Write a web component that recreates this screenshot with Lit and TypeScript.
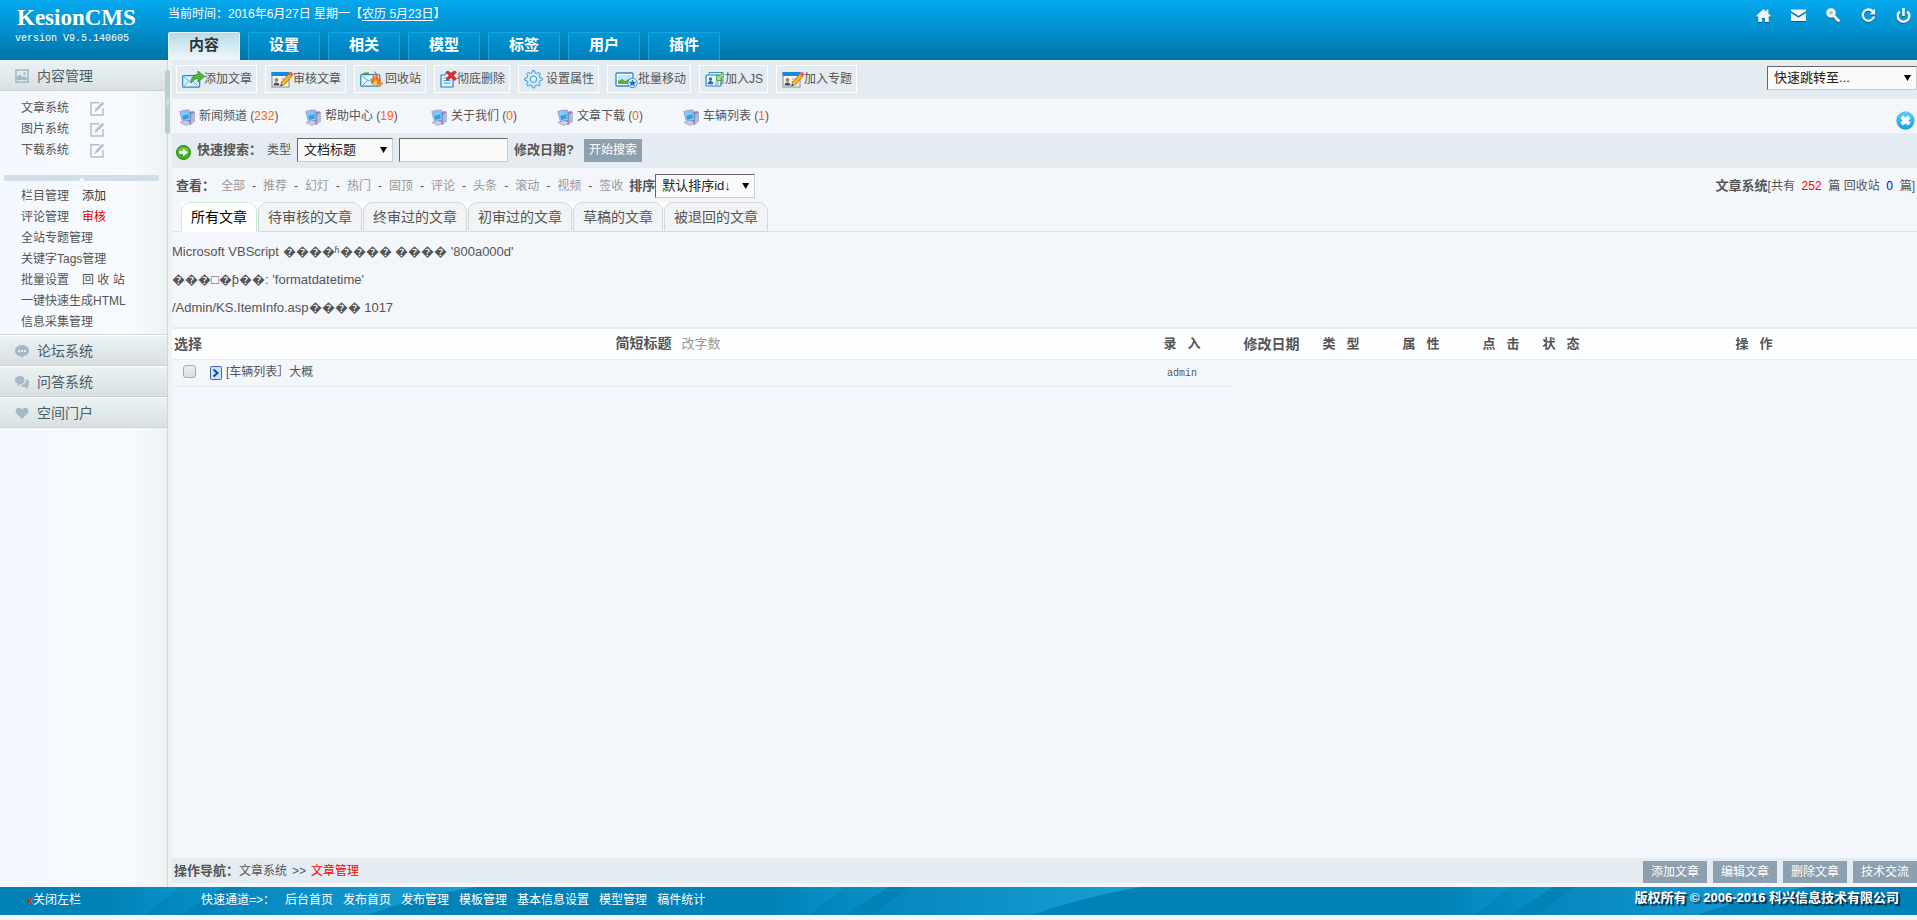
import { LitElement, html, css, svg, nothing } from "lit";
import { customElement, state } from "lit/decorators.js";
import { classMap } from "lit/directives/class-map.js";

const baseStyles = css`
  * { box-sizing: border-box; }
  a { color: inherit; text-decoration: none; }
  ul { list-style: none; margin: 0; padding: 0; }
  button { font: inherit; color: inherit; margin: 0; padding: 0; border: 0; background: none; cursor: pointer; }
  svg { display: block; flex: none; }
`;

const pencilCard = svg`
  <rect x="1" y="4" width="17" height="14" fill="#f4f7fa" stroke="#7e8c98"/>
  <rect x="0.5" y="3" width="18" height="4" fill="#1c86d8"/>
  <circle cx="5.5" cy="11" r="2" fill="#b8834a"/><path d="M2.5 16.5c0-4 6-4 6 0z" fill="#31506b"/>
  <path d="M10 10h5M10 12.5h3" stroke="#8fb4d6"/>
  <path d="M9.5 17l1.200-4 7-8 3 2.500-7 8z" fill="#f7b52c" stroke="#a86a10" stroke-width=".8"/>
  <path d="M17.500 5l1.500-1.800c1-1 4 1.200 3 2.600L20.700 7.500z" fill="#f0605c"/>
  <path d="M9.500 17l.6-2 1.500 1.200z" fill="#333"/>`;

const icons: Record<string, unknown> = {
  add: svg`
    <rect x="0.7" y="6.700" width="17" height="11.500" rx="1" fill="#d9effb" stroke="#2a8cc4" stroke-width="1.200"/>
    <path d="M1.500 7.500l7.500 6 7.500-6M1.500 17.500l5.500-5.500M16.500 17.500l-5.500-5.500" fill="none" stroke="#6fb4dc"/>
    <path d="M9 14c0-6 3-8.500 7-8.500V2l6.500 5.500L16 13V9.500c-3 0-5 1-7 4.500z" fill="#56b63c" stroke="#2f8a22" stroke-width=".8"/>`,
  audit: pencilCard,
  recycle: svg`
    <rect x="0.700" y="5.700" width="19" height="11.500" rx="1" fill="#e2f3fb" stroke="#2b8fb0" stroke-width="1.200"/>
    <path d="M1 5.500h8V3.500H5z" fill="#3c9a46"/><path d="M2 7l7 5 5-4M2 17l6-6" fill="none" stroke="#5aa9d2"/>
    <path d="M11 14c-1-4 2-4 2-8 2 1 2 3 2 4 1-2 0-5-1-8 4 2 4 5 4 8 1-1 1-2 1-3 3 3 3 9-3 9-3 0-4-1-5-2z" fill="#f0702a"/>
    <path d="M13.500 15c0-3 2-2 2-5 2 2 3 5 0 6z" fill="#ffd84a"/>
    <path d="M18 17l4-4 1.500 1-3.500 4z" fill="#d79a2a"/>`,
  remove: svg`
    <path d="M1 6h4l1-2h7v14H1z" fill="#e4f3fc" stroke="#2b83bd" stroke-width="1.200"/>
    <path d="M3.500 9h7M3.500 11.500h7M3.500 14h7" stroke="#4b9fd1"/>
    <path d="M6 3l2-1 3 2.500L14 2l2.500 1-3 3.500 3 3.500-2 1.500-3.500-3-3 3-2-1.500 3-3.500z" fill="#e02f36" stroke="#b31d24" stroke-width=".6"/>`,
  gear: svg`
    <path d="M8.500 1.500l2 0 .6 2.300 1.700.7 2.100-1.200 1.500 1.500-1.200 2.100.7 1.700 2.300.6v2l-2.300.6-.7 1.700 1.200 2.100-1.500 1.500-2.100-1.200-1.700.7-.6 2.300h-2l-.6-2.300-1.700-.7-2.100 1.200-1.500-1.500 1.200-2.100-.7-1.700L.8 11.200v-2l2.300-.6.7-1.700-1.200-2.100 1.500-1.500 2.100 1.200 1.700-.7z" fill="#cfe9f8" stroke="#3f98cb"/>
    <circle cx="9.500" cy="10.200" r="3.200" fill="#e5ecf3" stroke="#3f98cb"/>`,
  move: svg`
    <rect x="3" y="4" width="17" height="13" rx="1" fill="#fff" stroke="#2a8cc4" stroke-width="1.300"/>
    <rect x="5" y="6" width="13" height="9" fill="#bfe5f7"/><path d="M5 15v-3l4-2 3 2 6-3v6z" fill="#5fae3d"/>
    <circle cx="19.500" cy="14" r="4.700" fill="#e3f2fb" stroke="#3f8fc9"/>
    <path d="M19.500 10.500l1.200 2.300 2.500.3-1.800 1.700.4 2.500-2.300-1.200-2.300 1.200.4-2.500-1.800-1.700 2.500-.3z" fill="#1d76bb"/>`,
  js: svg`
    <path d="M4 3.500h14v11H4z" fill="#d5ecf8" stroke="#3d94c2"/><rect x="1" y="6" width="15" height="11" rx="1" fill="#e9f6fd" stroke="#2484bb" stroke-width="1.200"/>
    <circle cx="5.500" cy="10" r="1.700" fill="#2470a8"/><path d="M3 15c0-4 5-4 5 0zM10 13h4M10 15h4" fill="#2470a8" stroke="#2470a8" stroke-width=".6"/>
    <path d="M17.500 3.500l-4 4-2-2v6h6l-2-2 3.500-4z" fill="#a9dc8c" stroke="#3d8a25" stroke-width=".7"/>`,
  topic: pencilCard,
};

interface Tool { icon: string; text: string; w: number; }

const tools: Tool[] = [
  { icon: "add", text: "添加文章", w: 22 },
  { icon: "audit", text: "审核文章", w: 22 },
  { icon: "recycle", text: "回收站", w: 25 },
  { icon: "remove", text: "彻底删除", w: 17 },
  { icon: "gear", text: "设置属性", w: 22 },
  { icon: "move", text: "批量移动", w: 25 },
  { icon: "js", text: "加入JS", w: 20 },
  { icon: "topic", text: "加入专题", w: 22 },
];

@customElement("cms-header")
class CmsHeader extends LitElement {
  @state() private active = 0;

  static styles = [baseStyles, css`
    :host { display: grid; grid-template-columns: 168px 1fr; height: 60px; color: #fff;
      background: linear-gradient(#06a8ee, #0193d2 45%, #0173a6); }
    .brand { padding: 4px 0 0 15px; }
    .logo { font: bold 23px/28px "Liberation Serif", serif; padding-left: 2px; }
    .version { font: 10px/14px "Liberation Mono", monospace; }
    .right { display: flex; flex-direction: column; justify-content: space-between; }
    .top { display: flex; justify-content: space-between; padding: 6px 6px 0 0; line-height: 16px; }
    .top u { text-underline-offset: 2px; }
    .quick { display: flex; gap: 20px; padding-top: 2px; filter: drop-shadow(0 1px 0 #0a5c86); }
    nav { display: flex; gap: 8px; }
    .tab { width: 72px; height: 28px; font-weight: bold; font-size: 15px; line-height: 24px; padding-bottom: 3px;
      background: linear-gradient(#0295d5, #0180bb); border: 1px solid #16a5df; border-bottom: 0; border-radius: 2px 2px 0 0; }
    .tab.on { color: #333; background: linear-gradient(#b7dbe8, #f2f7fb); border-color: #e6f3f8; }
  `];

  render() {
    const tabs = ["内容", "设置", "相关", "模型", "标签", "用户", "插件"];
    return html`
      <div class="brand">
        <div class="logo">KesionCMS</div>
        <div class="version">version V9.5.140605</div>
      </div>
      <div class="right">
        <div class="top">
          <span>当前时间：2016年6月27日 星期一【<u>农历 5月23日</u>】</span>
          <div class="quick">
            <a href="#" aria-label="首页"><svg width="15" height="15" viewBox="0 0 15 15" fill="#eef4f7"><path d="M7.500 1L0 8l1 .8 1.200-.6V14H6v-4h3v4h3.800V8.200l1.200.6 1-.8-2.500-2.300V1.500h-2v2.200z"/></svg></a>
            <a href="#" aria-label="邮件"><svg width="15" height="15" viewBox="0 0 15 15" fill="#eef4f7"><path d="M0 1.500h15v1.800L7.500 8 0 3.300z"/><path d="M0 5l7.500 4.700L15 5v8H0z"/></svg></a>
            <a href="#" aria-label="密码"><svg width="15" height="15" viewBox="0 0 15 15"><circle cx="5" cy="5" r="3.300" fill="#8cc3dd" stroke="#eef4f7" stroke-width="3"/><path d="M7.500 7.500l6 6M10 12.500l2-2" stroke="#eef4f7" stroke-width="2.500"/></svg></a>
            <a href="#" aria-label="刷新"><svg width="15" height="15" viewBox="0 0 15 15"><path d="M11.800 3.500A5.700 5.700 0 1 0 13 8.500" fill="none" stroke="#eef4f7" stroke-width="2.300"/><path d="M14 .5v6H8.500z" fill="#eef4f7"/></svg></a>
            <a href="#" aria-label="退出"><svg width="15" height="15" viewBox="0 0 15 15"><path d="M3.800 3.500a5.800 5.800 0 1 0 7.400 0" fill="none" stroke="#eef4f7" stroke-width="2.500"/><path d="M7.500 0v8" stroke="#eef4f7" stroke-width="2.600"/></svg></a>
          </div>
        </div>
        <nav>${tabs.map((t, i) => html`
          <button class=${classMap({ tab: true, on: i === this.active })} @click=${() => (this.active = i)}>${t}</button>`)}
        </nav>
      </div>`;
  }
}

@customElement("cms-sidebar")
class CmsSidebar extends LitElement {
  static styles = [baseStyles, css`
    :host { display: block; position: relative; color: #555; border-right: 1px solid #d0d6da;
      background: linear-gradient(90deg, #f4f8ff 0, #f7fafe 80%, #edf2f4); }
    .head { display: flex; align-items: center; gap: 8px; width: 100%; height: 31px; padding-left: 15px; font-size: 14px;
      color: #4a5d68; background: linear-gradient(#ebf2f3, #d9e0e2); border-bottom: 1px solid #cbd3d6; border-top: 1px solid #fff; }
    .group { padding: 7px 0 2px 21px; line-height: 21px; }
    .group li { display: flex; gap: 13px; }
    .group .edit { display: flex; align-items: center; padding-left: 8px; }
    .bar { width: 155px; height: 6px; margin: 12px 0 0 4px; background: #d3dde6; border-radius: 2px; display: grid; justify-content: center; align-items: end; }
    .bar i { border: 3px solid transparent; border-bottom: 4px solid #f7fafe; border-top: 0; }
    .group.more { padding: 5px 0 1px 21px; border-bottom: 1px solid #d3dadd; }
    .dark { color: #333; }
    .red { color: #d00; }
    .handle { position: absolute; right: -3px; top: 10px; width: 5px; height: 64px; border-radius: 2px; z-index: 1;
      background: #b9d0d3; display: grid; place-content: center; gap: 1px; }
    .handle i { width: 3px; height: 1px; background: #dfeaeb; }
  `];

  render() {
    const edit = html`<a class="edit" href="#" aria-label="编辑"><svg width="15" height="15" viewBox="0 0 15 15" fill="none" stroke="#b3c0ca" stroke-width="1.500"><path d="M9.500 1.700H1V14h12V7"/><path d="M5 10.500l1-3L12.500 1 14 2.500 7.500 9z" fill="#b3c0ca" stroke-width=".6"/></svg></a>`;
    const rows: [string, string?, string?][] = [
      ["栏目管理", "添加", "dark"], ["评论管理", "审核", "red"], ["全站专题管理"], ["关键字Tags管理"],
      ["批量设置", "回 收 站", ""], ["一键快速生成HTML"], ["信息采集管理"],
    ];
    return html`
      <button class="head"><svg width="14" height="14" viewBox="0 0 14 14"><rect x="1" y="1" width="12" height="12" fill="none" stroke="#a7b8c8" stroke-width="1.600"/><path d="M2 11V8l3-3 2 3 2-1 3 2v2z" fill="#a7b8c8"/><circle cx="9.500" cy="4.500" r="1.200" fill="#a7b8c8"/></svg>内容管理</button>
      <ul class="group">${["文章系统", "图片系统", "下载系统"].map((t) => html`<li><a href="#">${t}</a>${edit}</li>`)}</ul>
      <div class="bar"><i></i></div>
      <ul class="group more">${rows.map(([a, b, c]) => html`<li><a href="#">${a}</a>${b ? html`<a href="#" class=${c ?? ""}>${b}</a>` : nothing}</li>`)}</ul>
      <button class="head"><svg width="14" height="14" viewBox="0 0 14 14"><path d="M7 1c9 0 9 11 2 11L7 14l-2-2C-2 12-2 1 7 1z" fill="#a7b8c8"/><path d="M3 6h2v2H3zM6 6h2v2H6zM9 6h2v2H9z" fill="#e6edf0"/></svg>论坛系统</button>
      <button class="head"><svg width="14" height="14" viewBox="0 0 14 14" fill="#a7b8c8"><path d="M5 1c6 0 6 8 1 8L2 11l.5-2.500C-1.500 7-1 1 5 1z"/><path d="M11 4c4 1 4 6 1.500 7.200L13 14l-3-2c-2 .3-4-.7-4.500-2C10 10 11.500 7 11 4z"/></svg>问答系统</button>
      <button class="head"><svg width="14" height="14" viewBox="0 0 14 14"><path d="M7 13L1 7C-1 3 4-.5 7 3.500 10-.5 15 3 13 7z" fill="#a7b8c8"/></svg>空间门户</button>
      <div class="handle"><i></i><i></i><i></i><i></i></div>`;
  }
}

@customElement("cms-main")
class CmsMain extends LitElement {
  @state() private tab = 0;

  static styles = [baseStyles, css`
    :host { display: flex; flex-direction: column; min-width: 0; color: #555; background: #f3f6fb; border-left: 4px solid #eff2f3; }
    .tools { display: flex; justify-content: space-between; align-items: flex-start; height: 39px; padding: 5px 0 0 4px; background: #e4ebf1; }
    .list { display: flex; gap: 8px; }
    .tool { display: flex; align-items: center; height: 28px; padding: 0 4px 0 5px; border: 1px solid #fff; white-space: nowrap; }
    .tool svg { overflow: visible; }
    .cats { display: flex; justify-content: space-between; height: 34px; padding: 0 2px 0 7px; }
    .cats ul { display: grid; grid-template-columns: repeat(5, 126px); align-items: center; }
    .cats li { display: flex; align-items: center; gap: 3px; height: 34px; }
    .cats li svg { margin-top: 3px; }
    .num { color: #f60; }
    .close { align-self: flex-end; margin-bottom: 3px; }
    .search { display: flex; align-items: center; height: 35px; padding: 0 0 1px 4px; background: #e4ebf1; }
    .search .go { margin: 4px 6px 0 0; }
    b { font-size: 13px; }
    .kind { padding: 0 6px 0 5px; }
    .pick { position: relative; display: block; color: #222; }
    .pick::after { content: ""; position: absolute; right: 6px; top: 9px; width: 7px; height: 6px; background: #000; clip-path: polygon(0 0, 100% 0, 50% 100%); pointer-events: none; }
    select, input.text { height: 24px; width: 100%; font: inherit; font-size: 13px; color: #222; background: #fafafa; border: 1px solid; border-color: #666 #ccc #ccc #666; border-radius: 0; padding: 0 6px; appearance: none; display: block; outline: 0; }
    .w96 { width: 96px; }
    .w100 { width: 100px; }
    .w150 { width: 150px; }
    .tools .pick { margin-top: 1px; }
    input.text { width: 109px; margin: 0 6px; }
    .submit { height: 23px; padding: 0 5px; margin-left: 10px; color: #fff; background: #8ca0b0; }
    .view { display: flex; align-items: center; justify-content: space-between; height: 34px; padding: 2px 2px 0 4px; }
    .view > div { display: flex; align-items: center; }
    .filters { display: flex; color: #999; padding: 0 6px; }
    .filters li + li::before { content: "-"; display: inline-block; width: 18px; text-align: center; color: #555; }
    .red { color: #f00; }
    .blue { color: #00f; }
    .count { white-space: pre; }
    .tabs { display: flex; gap: 1px; height: 30px; padding-left: 9px; box-shadow: inset 0 -1px #e6e4da; }
    .tabs button { background: #fff; font-size: 14px; height: 30px; }
    .tabs span { display: block; height: 30px; line-height: 29px; padding: 0 9px; border: 1px solid #d3d8db; border-radius: 9px 9px 0 0; background: #f2f3f4; }
    .tabs .on span { color: #000; background: #fff; border-color: #c3edd2; border-bottom-color: #fff; }
    .error { padding: 6px 0 5px; font-size: 13px; line-height: 28px; }
    .error p { margin: 0; }
    table { width: 100%; table-layout: fixed; border-collapse: collapse; border-top: 2px solid #e0edff; }
    th { height: 31px; padding: 0; background: #fcfeff; border-bottom: 1px solid #e0edff; font-size: 14px; white-space: pre; }
    th.sm { font-size: 13px; }
    th a { font-weight: normal; font-size: 13px; color: #999; padding-left: 10px; }
    td { height: 27px; padding: 0 0 2px; border-bottom: 1px solid #e0edff; }
    td.none { border: 0; }
    td input { display: block; width: 13px; height: 13px; margin: 0 0 0 11px; appearance: none; border: 1px solid #aaa; border-radius: 3px; background: linear-gradient(#eee, #ddd); }
    .entry { display: flex; align-items: center; gap: 4px; padding-left: 6px; }
    .entry svg { margin-top: 3px; }
    .user { text-align: center; font: 10px/20px "Liberation Mono", monospace; padding-top: 4px; }
    .c0 { width: 32px; } .c2 { width: 100px; } .c3 { width: 79px; } .c4 { width: 60px; } .c8 { width: 326px; }
    .grow { flex: 1; }
    .foot { display: flex; justify-content: space-between; align-items: flex-end; height: 25px; margin: 3px 0 4px; padding-left: 2px; background: #e4ebf1; }
    .path { align-self: center; display: flex; align-items: center; }
    .path span { padding: 0 5px; }
    .acts { display: flex; gap: 6px; }
    .acts button { height: 22px; padding: 0 8px; color: #fff; background: #8ca0b0; }
  `];

  render() {
    const cats: [string, number][] = [["新闻频道", 232], ["帮助中心", 19], ["关于我们", 0], ["文章下载", 0], ["车辆列表", 1]];
    const filters = ["全部", "推荐", "幻灯", "热门", "固顶", "评论", "头条", "滚动", "视频", "签收"];
    const tabs = ["所有文章", "待审核的文章", "终审过的文章", "初审过的文章", "草稿的文章", "被退回的文章"];
    return html`
      <div class="tools">
        <div class="list">${tools.map((t) => html`
          <button class="tool"><svg width=${t.w} height="20" viewBox=${`0 0 ${t.w} 20`}>${icons[t.icon]}</svg>${t.text}</button>`)}
        </div>
        <label class="pick w150"><select aria-label="快速跳转"><option>快速跳转至...</option></select></label>
      </div>
      <div class="cats">
        <ul>${cats.map(([n, c]) => html`
          <li><svg width="17" height="17" viewBox="0 0 17 17"><path d="M9 4l4-2 3 1v9l-5 4-3-2z" fill="#8488b0"/><path d="M12 5.500l4-2.500v9l-4 3.500z" fill="#b4b7d6"/><path d="M.8 2.500Q6 .5 10.500 1.200L11 11l-7.500 1.500z" fill="#b9d2f0" stroke="#7b94c4" stroke-width=".8"/><path d="M2 3.500q4-1.500 7.300-1.200l.5 7.400-5.600 1.300z" fill="#2f9df0"/><path d="M2 3.500q4-1.500 7.300-1.200l.2 3-7 2z" fill="#7ccbfb"/><path d="M1 13.500l6-2 5 2-5 3z" fill="#cdd0e2" stroke="#8c8fae" stroke-width=".6"/></svg>
            <a href="#">${n} (<span class="num">${c}</span>)</a></li>`)}
        </ul>
        <button class="close" aria-label="关闭"><svg width="19" height="19" viewBox="0 0 19 19"><defs><linearGradient id="g" x2="0" y2="1"><stop stop-color="#5ed0f7"/><stop offset="1" stop-color="#10a3df"/></linearGradient></defs><circle cx="9.500" cy="9.500" r="9.200" fill="url(#g)"/><path d="M5.800 5.800l7.400 7.400M13.200 5.800l-7.400 7.400" stroke="#fff" stroke-width="4"/></svg></button>
      </div>
      <div class="search">
        <svg class="go" width="15" height="15" viewBox="0 0 15 15"><circle cx="7.500" cy="7.500" r="7" fill="#3fae22" stroke="#2a8a18"/><path d="M2 6c1-5 10-5 11 0-3 2-8 2-11 0z" fill="#8bd66b" opacity=".6"/><path d="M3 6.300h4V3.500l5 4-5 4V8.700H3z" fill="#fff"/></svg>
        <b>快速搜索：</b>
        <label class="kind" for="kind">类型</label>
        <span class="pick w96"><select id="kind"><option>文档标题</option></select></span>
        <input class="text" type="text" aria-label="关键字">
        <b>修改日期?</b>
        <button class="submit">开始搜索</button>
      </div>
      <div class="view">
        <div>
          <b>查看：</b>
          <ul class="filters">${filters.map((f) => html`<li><a href="#">${f}</a></li>`)}</ul>
          <b><label for="order">排序</label></b>
          <span class="pick w100"><select id="order"><option>默认排序id↓</option></select></span>
        </div>
        <div class="count"><b>文章系统</b>[共有  <span class="red">252</span>  篇 回收站  <span class="blue">0</span>  篇]</div>
      </div>
      <div class="tabs">${tabs.map((t, i) => html`
        <button class=${classMap({ on: i === this.tab })} @click=${() => (this.tab = i)}><span>${t}</span></button>`)}
      </div>
      <div class="error">
        <p>Microsoft VBScript ����ʱ���� ���� '800a000d'</p>
        <p>���□�ƥ��: 'formatdatetime'</p>
        <p>/Admin/KS.ItemInfo.asp���� 1017</p>
      </div>
      <table>
        <colgroup><col class="c0"><col><col class="c2"><col class="c3"><col class="c4"><col class="c2"><col class="c4"><col class="c4"><col class="c8"></colgroup>
        <thead><tr><th>选择</th><th>简短标题<a href="#">改字数</a></th><th class="sm">录   入</th><th>修改日期</th><th class="sm">类   型</th><th class="sm">属   性</th><th class="sm">点   击</th><th class="sm">状   态</th><th class="sm">操   作</th></tr></thead>
        <tbody><tr>
          <td><input type="checkbox" aria-label="选择文章"></td>
          <td><div class="entry"><svg width="12" height="14" viewBox="0 0 12 14"><rect x=".5" y=".5" width="11" height="13" rx="1" fill="#c8e6fb" stroke="#4a63b0"/><path d="M3.500 3.500L7.500 7l-4 3.500" fill="none" stroke="#1c3f9c" stroke-width="2"/></svg><a href="#">[车辆列表］大概</a></div></td>
          <td class="user">admin</td>
          <td class="none" colspan="6"></td>
        </tr></tbody>
      </table>
      <div class="grow"></div>
      <div class="foot">
        <div class="path"><b>操作导航：</b><a href="#">文章系统</a><span>&gt;&gt;</span><a href="#" class="red">文章管理</a></div>
        <div class="acts">${["添加文章", "编辑文章", "删除文章", "技术交流"].map((t) => html`<button>${t}</button>`)}</div>
      </div>`;
  }
}

@customElement("cms-footer")
class CmsFooter extends LitElement {
  static styles = [baseStyles, css`
    :host { display: grid; height: 28px; color: #fff; background: #0082b6; margin-bottom: 5px; }
    :host > * { grid-area: 1 / 1; min-width: 0; }
    .art { width: 100%; height: 28px; }
    .row { position: relative; display: flex; align-items: center; padding: 0 18px 2px 27px; }
    .side { width: 174px; }
    .x { color: #f22; font: bold 10px "Liberation Mono", monospace; }
    nav { display: flex; gap: 10px; margin-left: 10px; }
    .copy { margin-left: auto; font-weight: bold; font-size: 13px; line-height: 16px; padding-bottom: 4px; text-shadow: 2px 2px 1px #123; }
  `];

  render() {
    return html`
      <svg class="art" aria-hidden="true">
        <defs>
          <linearGradient id="a"><stop stop-color="#0082b6"/><stop offset="1" stop-color="#0a92cc"/></linearGradient>
          <linearGradient id="b"><stop stop-color="#0585bd"/><stop offset="1" stop-color="#189fd6"/></linearGradient>
          <pattern id="p" width="665" height="28" patternUnits="userSpaceOnUse" x="110">
            <path d="M0 0H70L35 28H0z" fill="url(#a)"/>
            <path d="M70 0h43L71 28H35z" fill="url(#a)"/>
            <path d="M134 0h232C310 10 280 20 257 28H96z" fill="url(#b)"/>
          </pattern>
        </defs>
        <rect width="100%" height="28" fill="url(#p)"/>
      </svg>
      <div class="row">
        <a class="side" href="#"><span class="x">x</span>关闭左栏</a>
        <span>快速通道=&gt;：</span>
        <nav>${["后台首页", "发布首页", "发布管理", "模板管理", "基本信息设置", "模型管理", "稿件统计"].map((t) => html`<a href="#">${t}</a>`)}</nav>
        <span class="copy">版权所有 © 2006-2016 科兴信息技术有限公司</span>
      </div>`;
  }
}

@customElement("app-root")
class AppRoot extends LitElement {
  static styles = [baseStyles, css`
    :host { display: flex; flex-direction: column; min-height: 100vh; background: #f5f5f5;
      font: 12px/18px "Liberation Sans", "Noto Sans CJK SC", sans-serif; text-spacing-trim: space-all; }
    .body { flex: 1; display: grid; grid-template-columns: 168px minmax(0, 1fr); }
  `];

  render() {
    return html`
      <cms-header></cms-header>
      <div class="body"><cms-sidebar></cms-sidebar><cms-main></cms-main></div>
      <cms-footer></cms-footer>`;
  }
}
